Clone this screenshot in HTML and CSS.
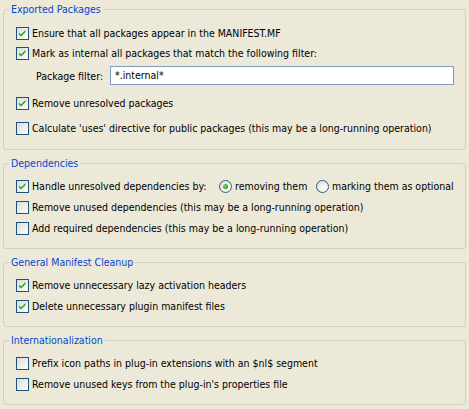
FILE: index.html
```html
<!DOCTYPE html>
<html>
<head>
<meta charset="utf-8">
<link rel="stylesheet" href="styles.css">
</head>
<body>
<div class="page">
  <fieldset class="group group-exported">
    <legend>Exported Packages</legend>
    <div class="row"><span class="cb on"><svg viewBox="0 0 11 11"><path d="M2 4.5 L4 6.5 L8.5 2 L8.5 4 L4 8.5 L2 6.5 Z"/></svg></span><span class="txt">Ensure that all packages appear in the MANIFEST.MF</span></div>
    <div class="row row-tight"><span class="cb on"><svg viewBox="0 0 11 11"><path d="M2 4.5 L4 6.5 L8.5 2 L8.5 4 L4 8.5 L2 6.5 Z"/></svg></span><span class="txt">Mark as internal all packages that match the following filter:</span></div>
    <div class="filter-row">
      <label class="filter-label">Package filter:</label>
      <div class="input">*.internal*</div>
    </div>
    <div class="row row-after-filter"><span class="cb on"><svg viewBox="0 0 11 11"><path d="M2 4.5 L4 6.5 L8.5 2 L8.5 4 L4 8.5 L2 6.5 Z"/></svg></span><span class="txt">Remove unresolved packages</span></div>
    <div class="row row-wide"><span class="cb"></span><span class="txt">Calculate 'uses' directive for public packages (this may be a long-running operation)</span></div>
  </fieldset>

  <fieldset class="group">
    <legend>Dependencies</legend>
    <div class="row">
      <span class="cb on"><svg viewBox="0 0 11 11"><path d="M2 4.5 L4 6.5 L8.5 2 L8.5 4 L4 8.5 L2 6.5 Z"/></svg></span><span class="txt handle-label">Handle unresolved dependencies by:</span>
      <span class="radio-opt opt-first"><span class="rb on"></span><span class="txt">removing them</span></span>
      <span class="radio-opt"><span class="rb"></span><span class="txt">marking them as optional</span></span>
    </div>
    <div class="row"><span class="cb"></span><span class="txt">Remove unused dependencies (this may be a long-running operation)</span></div>
    <div class="row"><span class="cb"></span><span class="txt">Add required dependencies (this may be a long-running operation)</span></div>
  </fieldset>

  <fieldset class="group">
    <legend>General Manifest Cleanup</legend>
    <div class="row"><span class="cb on"><svg viewBox="0 0 11 11"><path d="M2 4.5 L4 6.5 L8.5 2 L8.5 4 L4 8.5 L2 6.5 Z"/></svg></span><span class="txt">Remove unnecessary lazy activation headers</span></div>
    <div class="row"><span class="cb on"><svg viewBox="0 0 11 11"><path d="M2 4.5 L4 6.5 L8.5 2 L8.5 4 L4 8.5 L2 6.5 Z"/></svg></span><span class="txt">Delete unnecessary plugin manifest files</span></div>
  </fieldset>

  <fieldset class="group">
    <legend>Internationalization</legend>
    <div class="row"><span class="cb"></span><span class="txt">Prefix icon paths in plug-in extensions with an $nl$ segment</span></div>
    <div class="row"><span class="cb"></span><span class="txt">Remove unused keys from the plug-in's properties file</span></div>
  </fieldset>
</div>
</body>
</html>
```

FILE: styles.css
```css
html, body {
  margin: 0;
  padding: 0;
  background: #ece9d8;
}

body {
  font-family: "DejaVu Sans Condensed", "DejaVu Sans", sans-serif;
  font-size: 10.5px;
  color: #000;
}

.page {
  display: flex;
  flex-direction: column;
  gap: 7px;
  padding-top: 3px;
}

.group {
  margin: 0 3px;
  padding: 10px 0 13px 12px;
  border: 1px solid #d0d0bf;
  border-radius: 3px;
  min-width: 0;
}

.group legend {
  margin-left: -7px;
  padding: 0 2px;
  line-height: 13px;
  color: #0046d5;
}

.group-exported {
  padding-top: 11px;
  padding-bottom: 14px;
}

.row {
  display: flex;
  align-items: center;
  height: 13px;
  line-height: 13px;
  white-space: nowrap;
}

.row + .row {
  margin-top: 8px;
}

.group-exported .row-tight {
  margin-top: 7px;
}

.group-exported .row-after-filter {
  margin-top: 12px;
}

.group-exported .row-wide {
  margin-top: 12px;
}

.cb {
  flex: none;
  box-sizing: border-box;
  width: 13px;
  height: 13px;
  border: 1px solid #1c5180;
  background: linear-gradient(135deg, #dcdcd7 0%, #f4f4f0 70%, #ffffff 100%);
  margin-right: 3px;
  display: flex;
}

.cb svg {
  width: 11px;
  height: 11px;
}

.cb svg path {
  fill: #21a121;
}

.txt {
  display: block;
}

.handle-label {
  width: 187px;
}

.radio-opt {
  display: flex;
  align-items: center;
}

.opt-first {
  width: 97px;
}

.rb {
  flex: none;
  box-sizing: border-box;
  width: 13px;
  height: 13px;
  border-radius: 50%;
  border: 1px solid #2f5e8c;
  background: radial-gradient(circle at 65% 65%, #ffffff 0%, #f0f0ea 45%, #d6d6ce 100%);
  margin-right: 3px;
  position: relative;
}

.rb.on::after {
  content: "";
  position: absolute;
  left: 3px;
  top: 3px;
  width: 5px;
  height: 5px;
  border-radius: 50%;
  background: radial-gradient(circle at 40% 40%, #7be07b 0%, #21a121 70%);
}

.filter-row {
  display: flex;
  align-items: center;
  margin-top: 6px;
  height: 19px;
}

.filter-label {
  margin-left: 20px;
  width: 74px;
}

.input {
  box-sizing: border-box;
  width: 344px;
  height: 19px;
  border: 1px solid #7f9db9;
  background: #fff;
  padding-left: 4px;
  line-height: 17px;
}
```
